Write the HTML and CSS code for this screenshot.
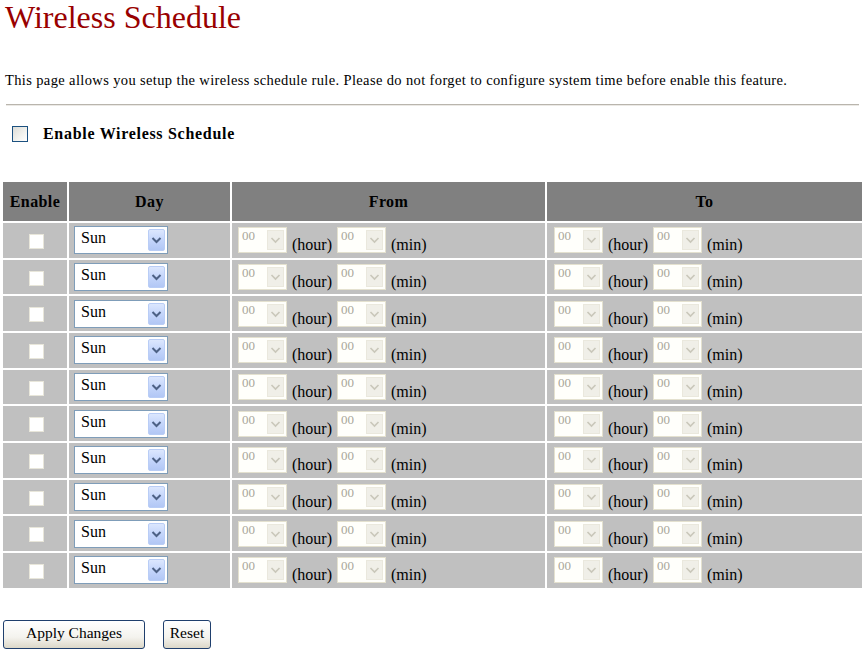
FILE: index.html
```html
<!DOCTYPE html>
<html>
<head>
<meta charset="utf-8">
<link rel="stylesheet" href="styles.css">
</head>
<body>
<h1 class="title">Wireless Schedule</h1>
<p class="desc">This page allows you setup the wireless schedule rule. Please do not forget to configure system time before enable this feature.</p>
<div class="rule"></div>
<div class="enable-row">
  <span class="cb-main"></span>
  <span class="enable-label">Enable Wireless Schedule</span>
</div>
<table class="sched">
  <thead>
    <tr>
      <th class="c-en">Enable</th>
      <th class="c-day">Day</th>
      <th class="c-from">From</th>
      <th class="c-to">To</th>
    </tr>
  </thead>
  <tbody id="rows"></tbody>
</table>
<div class="buttons">
  <span class="btn btn-apply">Apply Changes</span>
  <span class="btn btn-reset">Reset</span>
</div>
<script src="script.js"></script>
</body>
</html>
```
FILE: script.js
```js
(function () {
  var arrowBlue = '<svg width="17" height="22" viewBox="0 0 17 22"><path d="M4.5 9 L8.5 13 L12.5 9" fill="none" stroke="#4d6185" stroke-width="2"/></svg>';
  var arrowGray = '<svg width="17" height="22" viewBox="0 0 17 22"><path d="M4.5 9 L8.5 13 L12.5 9" fill="none" stroke="#c9c7ba" stroke-width="1.6"/></svg>';
  function dis() {
    return '<span class="sel-dis"><span class="sel-dis-text">00</span><span class="sel-dis-arrow">' + arrowGray + '</span></span>';
  }
  function time() {
    return '<div class="timecell">' + dis() + '<span class="unit">(hour)</span>' + dis() + '<span class="unit">(min)</span></div>';
  }
  var html = '';
  for (var i = 0; i < 10; i++) {
    html += '<tr>' +
      '<td class="c-en"><span class="cb-dis"></span></td>' +
      '<td class="c-day"><div class="daycell"><span class="sel"><span class="sel-text">Sun</span><span class="sel-arrow">' + arrowBlue + '</span></span></div></td>' +
      '<td class="c-from">' + time() + '</td>' +
      '<td class="c-to">' + time() + '</td>' +
      '</tr>';
  }
  document.getElementById('rows').innerHTML = html;
})();
```
FILE: styles.css
```css
html, body {
  margin: 0;
  padding: 0;
  background: #ffffff;
}
body {
  font-family: "Liberation Serif", "DejaVu Serif", serif;
  color: #000;
}
.title {
  margin: 0;
  padding: 0 0 0 5px;
  font-size: 32px;
  line-height: 34px;
  height: 34px;
  font-weight: normal;
  color: #990000;
}
.desc {
  margin: 38px 0 0 5px;
  font-size: 14.5px;
  letter-spacing: 0.37px;
  line-height: 16px;
  white-space: nowrap;
}
.rule {
  margin: 16px 8px 0 6px;
  height: 0;
  border-top: 1px solid #b9b5ad;
  border-bottom: 1px solid #ebe9e5;
}
.enable-row {
  display: flex;
  align-items: center;
  margin: 19px 0 0 12px;
  height: 18px;
}
.cb-main {
  width: 14px;
  height: 14px;
  border: 1px solid #1c5180;
  background: linear-gradient(135deg, #dcdcd7 0%, #f3f3ef 60%, #ffffff 100%);
}
.enable-label {
  margin-left: 15px;
  font-weight: bold;
  font-size: 16px;
  letter-spacing: 0.7px;
}
.sched {
  margin: 37px 0 0 1px;
  border-collapse: separate;
  border-spacing: 2px;
  table-layout: fixed;
}
.sched th {
  background: #808080;
  height: 39px;
  padding: 0;
  font-size: 16px;
  font-weight: bold;
  letter-spacing: 0.4px;
  text-align: center;
  vertical-align: middle;
}
.sched td {
  background: #c0c0c0;
  height: 34.67px;
  padding: 0;
  vertical-align: middle;
}
.c-en { width: 64px; }
.c-day { width: 161px; }
.c-from { width: 313px; }
.c-to { width: 315px; }
td.c-en { text-align: center; }
.cb-dis {
  display: inline-block;
  width: 13px;
  height: 13px;
  border: 1px solid #e8e6da;
  background: #ffffff;
  vertical-align: middle;
  margin-left: 2px;
}
.daycell {
  display: flex;
  align-items: center;
  padding-left: 5px;
}
.sel {
  display: flex;
  box-sizing: border-box;
  width: 94px;
  height: 28px;
  border: 1px solid #7f9db9;
  background: #fff;
  padding: 2px;
}
.sel-text {
  flex: 1;
  font-size: 16px;
  line-height: 18px;
  padding-left: 4px;
}
.sel-arrow {
  width: 17px;
  height: 22px;
  box-sizing: border-box;
  border: 1px solid #b9cdf6;
  border-radius: 2px;
  background: linear-gradient(180deg, #dce7fe 0%, #c4d5fb 50%, #b2c7f5 100%);
  display: flex;
}
.sel-arrow svg { margin: -1px; }
.timecell {
  display: flex;
  align-items: center;
  padding-left: 6px;
}
td.c-to .timecell { padding-left: 7px; }
.sel-dis {
  display: flex;
  box-sizing: border-box;
  width: 49px;
  height: 26px;
  border: 1px solid #e4e1cf;
  background: #fffffb;
  padding: 2px;
}
.sel-dis-text {
  flex: 1;
  font-size: 13px;
  line-height: 12px;
  color: #a9a79a;
  padding-left: 1px;
}
.sel-dis-arrow {
  width: 17px;
  height: 20px;
  box-sizing: border-box;
  border: 1px solid #eae8dd;
  background: #f0efe8;
  display: flex;
  overflow: hidden;
}
.sel-dis-arrow svg { margin: -2px -1px; }
.unit {
  font-size: 16px;
  margin: 10px 5px 0 5px;
  line-height: 16px;
}
.buttons {
  display: flex;
  margin: 30px 0 0 3px;
  gap: 18px;
}
.btn {
  display: flex;
  align-items: center;
  justify-content: center;
  box-sizing: border-box;
  height: 29px;
  border: 1px solid #1f3f6d;
  border-radius: 3px;
  background: linear-gradient(180deg, #ffffff 0%, #f4f3ee 60%, #dcd8c8 100%);
  font-size: 15.5px;
  padding-bottom: 3px;
}
.btn-apply { width: 142px; }
.btn-reset { width: 48px; }
```
